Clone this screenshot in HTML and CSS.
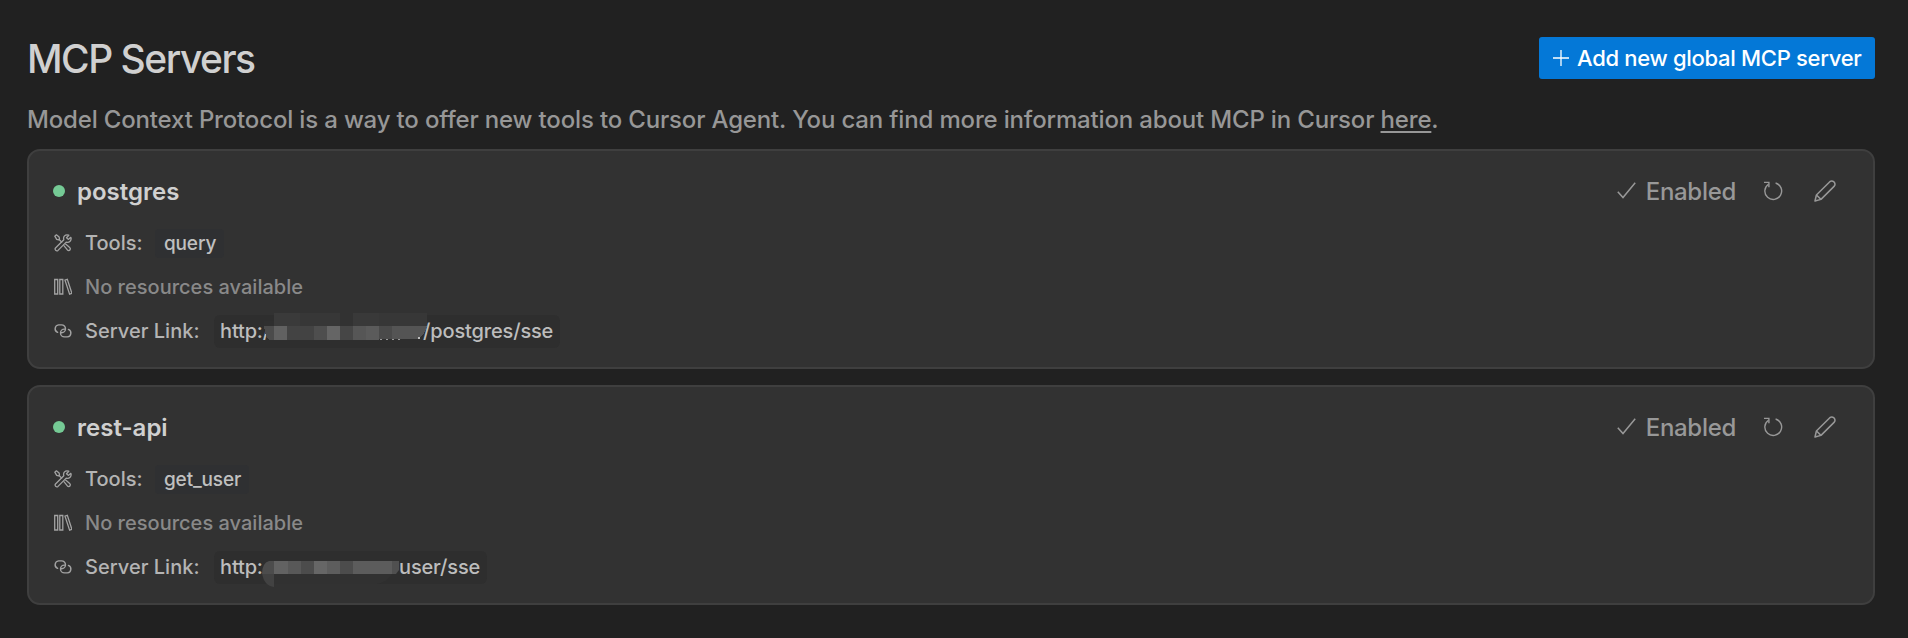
FILE: index.html
```html
<!DOCTYPE html>
<html lang="en">
<head>
<meta charset="utf-8">
<title>MCP Servers</title>
<link rel="stylesheet" href="styles.css">
</head>
<body>
<svg width="0" height="0" class="defs">
  <symbol id="tools" viewBox="0 0 18 18"><g fill="none" stroke="currentColor" stroke-width="1.3" stroke-linejoin="round" stroke-linecap="round"><path d="M.8 2.2 2.4.8 5.1 3 5.5 5 4.6 5.9 2.7 5.4z"/><path d="M5.3 5.7 7.7 8.1M9.9 11.7 13.4 15.9Q14.8 17.2 15.9 16 17 14.8 15.7 13.6L11.6 10.1"/><path d="M16.8 3.3 14.3 5.4 12.5 3.7 14.8 1.2Q12.2.2 10.5 1.9 9.1 3.5 9.8 5.7L1.5 14Q.6 15.2 1.7 16.3 2.8 17.3 4 16.4L12.2 8.1Q14.4 8.8 16.1 7.3 17.7 5.4 16.8 3.3z"/></g></symbol>
  <symbol id="library" viewBox="0 0 18 18"><g fill="none" stroke="currentColor" stroke-width="1.3"><path d="M.7 1.5h3v14.5h-3zM5.8 1.5h3v14.5h-3z"/><path d="M11 2.2 13.3 1.4 17.9 15.3 15.6 16.1z"/></g></symbol>
  <symbol id="link" viewBox="0 0 18 18"><g fill="none" stroke="currentColor" stroke-width="1.4" stroke-linecap="round"><path d="M3.6 10.4A3.9 3.9 0 0 1 4.6 2.9H7.6A3.9 3.9 0 0 1 7.6 10.7H6.9"/><path d="M14.4 7.4A3.9 3.9 0 0 1 13.4 14.9H10.4A3.9 3.9 0 0 1 10.4 7.1H11.1"/></g></symbol>
  <symbol id="check" viewBox="0 0 19 18"><path d="M.8 9.7 6 15.6 18.2.8" fill="none" stroke="currentColor" stroke-width="1.5"/></symbol>
  <symbol id="refresh" viewBox="0 0 20 20"><g fill="none" stroke="currentColor" stroke-width="1.4"><path d="M12.6 2A8.4 8.4 0 1 1 5.4 3.2"/><path d="M1 1.4H5.9V6.2"/></g></symbol>
  <symbol id="pencil" viewBox="0 0 22 22"><g fill="none" stroke="currentColor" stroke-width="1.5" stroke-linejoin="round"><path d="M1 21 2.4 15 15.8 1.7Q17.8.2 20 1.9 21.8 3.9 20.3 6.1L7 19.4z"/><path d="M2.4 15 7 19.4"/></g></symbol>
</svg>
<main class="page">
  <header class="head">
    <h1 class="title">MCP Servers</h1>
    <button class="add"><svg class="plus" viewBox="0 0 16 16"><path d="M8 0V16M0 8H16" stroke="currentColor" stroke-width="1.3"/></svg><span>Add new global MCP server</span></button>
  </header>
  <p class="intro">Model Context Protocol is a way to offer new tools to Cursor Agent. You can find more information about MCP in Cursor <a class="here">here</a>.</p>
  <section class="card">
    <div class="top">
      <i class="dot"></i><h2 class="name">postgres</h2>
      <div class="actions"><svg class="check"><use href="#check"/></svg><span class="enabled">Enabled</span><svg class="refresh"><use href="#refresh"/></svg><svg class="pencil"><use href="#pencil"/></svg></div>
    </div>
    <div class="row"><svg class="icon"><use href="#tools"/></svg><span class="label tools">Tools:</span><span class="tag">query</span></div>
    <div class="row"><svg class="icon"><use href="#library"/></svg><span class="label none">No resources available</span></div>
    <div class="row"><svg class="icon"><use href="#link"/></svg><span class="label server">Server Link:</span><span class="url"><span class="scheme s1">http:/</span><svg class="mosaic m1" viewBox="0 0 158 33" shape-rendering="crispEdges">
      <path d="M-1 6H9V11H-1z" fill="#2f2f2f"/>
      <path d="M9-2H35V11H9z" fill="#3a3a3a"/><path d="M35-2H75V11H35z" fill="#373737"/><path d="M75-2H88V11H75z" fill="#323232"/><path d="M88-2H114V11H88z" fill="#393939"/><path d="M114-2H162V11H114z" fill="#373737"/>
      <path d="M-1 11H9V25H4Q0 21-1 11z" fill="#4b4b4b"/><path d="M9 11H22V25H9z" fill="#616161"/><path d="M22 11H49V25H22z" fill="#434343"/><path d="M49 11H62V25H49z" fill="#4e4e4e"/><path d="M62 11H75V25H62z" fill="#656565"/><path d="M75 11H88V25H75z" fill="#464646"/><path d="M88 11H101V25H88z" fill="#565656"/><path d="M101 11H114V25H101z" fill="#5b5b5b"/><path d="M114 11H127V24H114z" fill="#4a4a4a"/><path d="M127 11H162Q160 20 152 24H127z" fill="#545454"/>
      <path d="M115 24.5H136" stroke="#999" stroke-dasharray="2 4"/><path d="M153 22h2v2h-2z" fill="#bdbdbd"/>
    </svg><span class="path">/postgres/sse</span></span></div>
  </section>
  <section class="card">
    <div class="top">
      <i class="dot"></i><h2 class="name">rest-api</h2>
      <div class="actions"><svg class="check"><use href="#check"/></svg><span class="enabled">Enabled</span><svg class="refresh"><use href="#refresh"/></svg><svg class="pencil"><use href="#pencil"/></svg></div>
    </div>
    <div class="row"><svg class="icon"><use href="#tools"/></svg><span class="label tools">Tools:</span><span class="tag">get_user</span></div>
    <div class="row"><svg class="icon"><use href="#library"/></svg><span class="label none">No resources available</span></div>
    <div class="row"><svg class="icon"><use href="#link"/></svg><span class="label server">Server Link:</span><span class="url"><span class="scheme s2">http:</span><svg class="mosaic m2" viewBox="0 0 137 33">
      <path d="M0 22H12V36Q2 35 0 22z" fill="#424242"/><path d="M12 23H130Q125 31 115 33H12z" fill="#313131"/>
      <path d="M0 23Q0 12 7 10H12V23z" fill="#4c4c4c"/><path d="M12 10H26V23H12z" fill="#626262"/><path d="M26 10H39V23H26z" fill="#585858"/><path d="M39 10H52V23H39z" fill="#4c4c4c"/><path d="M52 10H65V23H52z" fill="#666"/><path d="M65 10H78V23H65z" fill="#5d5d5d"/><path d="M78 10H91V23H78z" fill="#4c4c4c"/><path d="M91 10H130V23H91z" fill="#5c5c5c"/><path d="M130 10H137V19L134 23H130z" fill="#505050"/>
    </svg><span class="path">user/sse</span></span></div>
  </section>
</main>
</body>
</html>
```
FILE: styles.css
```css
* { box-sizing: border-box; margin: 0; }
body { background: #212121; font-family: Inter, "Liberation Sans", sans-serif; font-weight: 450; color: #a0a0a0; }
svg { display: block; flex: none; overflow: visible; }
.defs { position: absolute; }
.page { width: 1908px; height: 638px; padding: 37px 33px 0 27px; white-space: nowrap; }
.head { display: flex; justify-content: space-between; height: 42px; }
.title { font-size: 39px; line-height: 44px; font-weight: 450; letter-spacing: -1.5px; color: #d0d0d0; }
.add { display: flex; align-items: center; gap: 8px; width: 336px; height: 42px; padding: 0 0 0 14px; border: 0; border-radius: 3px; background: #0478d7; color: #fff; font: 500 22px Inter, sans-serif; letter-spacing: -0.3px; }
.plus { width: 16px; height: 16px; }
.intro { height: 70px; padding-top: 25px; font-size: 24px; line-height: 32px; letter-spacing: -0.165px; color: #979797; }
.here { text-decoration: underline; text-decoration-thickness: 2px; text-underline-offset: 3px; }
.card { height: 220px; border: 2px solid #3f3f3f; border-radius: 13px; background: #323232; margin-bottom: 16px; padding: 21px 36px 0 24px; }
.top { display: flex; align-items: center; height: 38px; margin-bottom: 11px; }
.dot { width: 12px; height: 12px; border-radius: 50%; background: #75ca95; }
.name { margin-left: 12px; font-size: 24px; font-weight: 600; color: #d0d0d0; }
.actions { margin-left: auto; display: flex; align-items: center; color: #989898; }
.check { width: 19px; height: 18px; }
.enabled { margin: 0 27px 0 10px; font-size: 24px; letter-spacing: -0.3px; }
.refresh { width: 20px; height: 20px; margin-right: 31px; }
.pencil { width: 22px; height: 22px; margin-right: 1px; }
.row { display: flex; align-items: center; height: 44px; }
.icon { width: 18px; height: 18px; margin: 0 13px 0 1px; color: #a3a3a3; }
.label { font-size: 20px; letter-spacing: 0.02px; color: #b4b4b4; }
.none { color: #898989; }
.tools { width: 57px; }
.server { width: 115px; }
.tag { margin-left: 13px; padding: 0 8px 0 9px; height: 29px; line-height: 30px; border-radius: 4px; background: #2f3032; font-size: 19px; letter-spacing: -0.15px; color: #c0c0c0; }
.url { display: flex; align-items: center; margin-left: 14px; padding: 0 7px 0 6px; height: 33px; border-radius: 6px; background: #2e2e2e; font-size: 20px; letter-spacing: -0.15px; color: #bdbdbd; }
.s1 { width: 45px; }
.s2 { width: 42px; }
.mosaic { height: 33px; }
.m1 { width: 158px; }
.m2 { width: 137px; }
```
